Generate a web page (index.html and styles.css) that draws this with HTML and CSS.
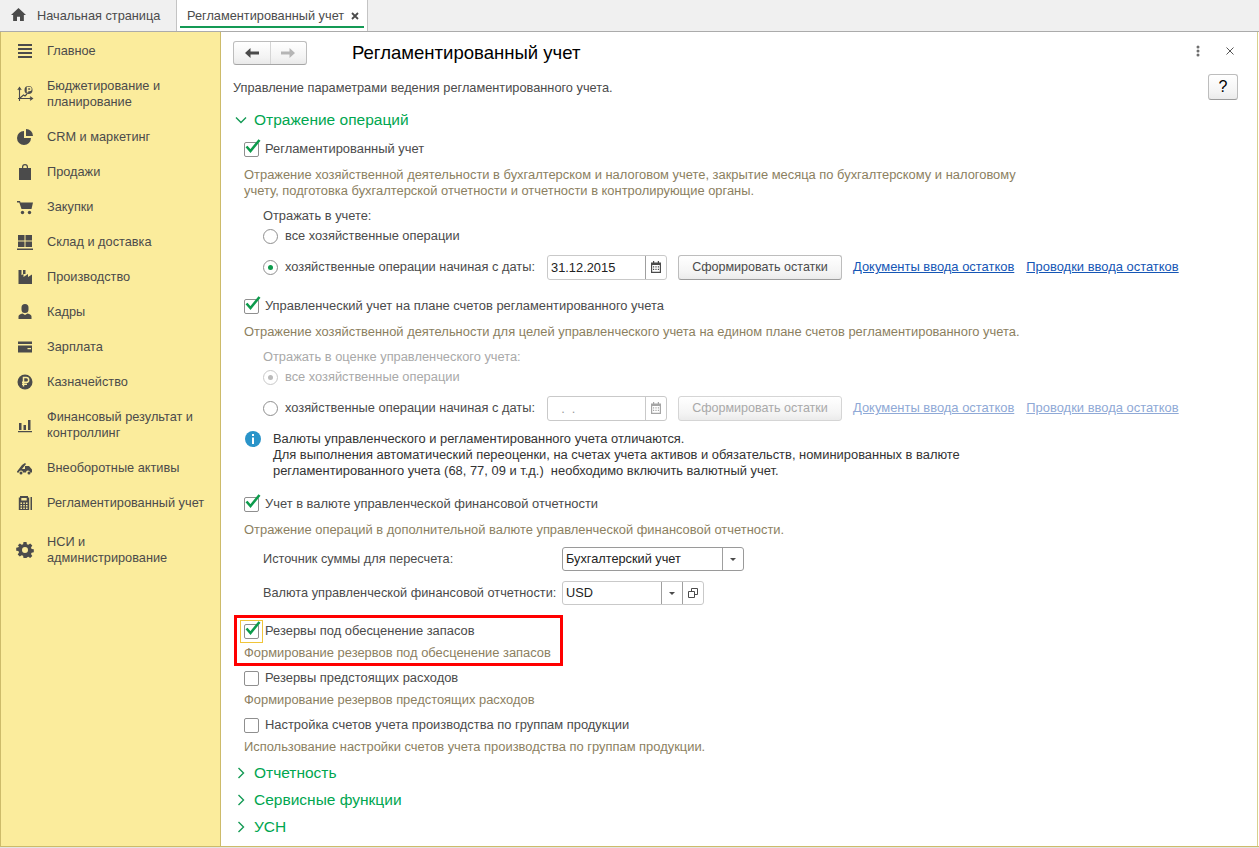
FILE: index.html
```html
<!DOCTYPE html>
<html lang="ru">
<head>
<meta charset="utf-8">
<title>Регламентированный учет</title>
<link rel="stylesheet" href="styles.css">
</head>
<body>
<div class="app">
  <header class="tabs">
    <div class="tab tab-home">
      <svg class="home-icon" viewBox="0 0 14 12"><path d="M7 0 0 6.500h2V12h3.600V8h2.800v4H12V6.500h2z"/></svg>
      <span>Начальная страница</span>
    </div>
    <div class="tab tab-active">
      <span>Регламентированный учет</span>
      <svg class="tab-close" viewBox="0 0 8 8"><path d="M1 1l6 6M7 1 1 7"/></svg>
    </div>
  </header>
  <div class="body">
    <nav class="side">
      <div class="side-item"><svg class="si" viewBox="0 0 16 16"><path d="M1 1h14v2H1zM1 5h14v2H1zM1 9h14v2H1zM1 13h14v2H1z"/></svg><span>Главное</span></div>
      <div class="side-item"><svg class="si" viewBox="0 0 16 16"><path class="thin" d="M2.500 15V2M.8 4 2.500 1.500 4.200 4M1 12.500h14M13 10.800l2.500 1.700-2.500 1.700M3 12 6.500 9l1.500 1L10 8"/><circle cx="11.500" cy="4" r="4"/><path class="cut" d="M10.500 6.500v-5h2a1.400 1.400 0 0 1 0 3h-2"/></svg><span>Бюджетирование и<br>планирование</span></div>
      <div class="side-item"><svg class="si" viewBox="0 0 16 16"><path d="M7 2a7 7 0 1 0 7 7H7z"/><path d="M9 0a7 7 0 0 1 7 7H9z"/></svg><span>CRM и маркетинг</span></div>
      <div class="side-item"><svg class="si" viewBox="0 0 16 16"><path d="M2 4h3V3a3 3 0 0 1 6 0v1h3v12H2zM6.200 4h3.600V3a1.800 1.800 0 0 0-3.600 0z"/></svg><span>Продажи</span></div>
      <div class="side-item"><svg class="si" viewBox="0 0 16 16"><path d="M0 2h3l.500 1.500H16L14.500 10H4.500L2.300 3.500H0z"/><circle cx="5.500" cy="13.500" r="1.700"/><circle cx="12.500" cy="13.500" r="1.700"/></svg><span>Закупки</span></div>
      <div class="side-item"><svg class="si" viewBox="0 0 16 16"><path d="M1 1h6.500v5.500H1zM8.500 1H15v5.500H8.500zM1 7.500h6.500V13H1zM8.500 7.500H15V13H8.500zM0 14.500h16V16H0z"/></svg><span>Склад и доставка</span></div>
      <div class="side-item"><svg class="si" viewBox="0 0 16 16"><path d="M1.500 1h3v7h-3zM6 1h2.500v4H6zM1.500 15V8l5-3v3l4.500-3v3l4-2.500V15z"/></svg><span>Производство</span></div>
      <div class="side-item"><svg class="si" viewBox="0 0 16 16"><path d="M8 0a3.500 3.500 0 0 1 3.500 3.500v2a3.500 3.500 0 0 1-7 0v-2A3.500 3.500 0 0 1 8 0zM5.500 9.500 8 11l2.500-1.500c2.500.5 4 1.500 4 3V15h-13v-2.500c0-1.500 1.500-2.500 4-3z"/></svg><span>Кадры</span></div>
      <div class="side-item"><svg class="si" viewBox="0 0 16 16"><path fill-rule="evenodd" d="M1 2.500h14V5H1zM1 6.500h14v7H1zM10.500 9v1.300H14V9z"/></svg><span>Зарплата</span></div>
      <div class="side-item"><svg class="si" viewBox="0 0 16 16"><circle cx="8" cy="8" r="7.500"/><path class="cut" d="M6.500 12.500v-9h2.800a2.400 2.400 0 0 1 0 4.800H5M5 10.200h5"/></svg><span>Казначейство</span></div>
      <div class="side-item"><svg class="si" viewBox="0 0 16 16"><path d="M2 6h2.500v7H2zM6.500 8H9v5H6.500zM11 3h2.500v10H11zM1 14h14v1.200H1z"/></svg><span>Финансовый результат и<br>контроллинг</span></div>
      <div class="side-item"><svg class="si" viewBox="0 0 16 16"><path d="M0 11.500 5 5l3-2 1 1-4 5h3V6h4l3 3.500v3h-2a2 2 0 0 0-4 0H6a2 2 0 0 0-4 0H0z"/><circle cx="4" cy="13" r="1.500"/><circle cx="12" cy="13" r="1.500"/></svg><span>Внеоборотные активы</span></div>
      <div class="side-item"><svg class="si" viewBox="0 0 16 16"><path fill-rule="evenodd" d="M3 1h8v1.500h1.200V15H1.800V2.500H3zM4.300 3v2.500h5.400V3zM3.500 7.500v1.500H5V7.500zM6.300 7.500v1.500h1.500V7.500zM9 7.500v1.500h1.500V7.500zM3.500 10v1.500H5V10zM6.300 10v1.500h1.500V10zM9 10v1.500h1.500V10zM3.500 12.500V14H5v-1.500zM6.300 12.500V14h1.500v-1.500zM9 12.500V14h1.500v-1.500z"/><path d="M13.500 2H15v13h-1.500z"/></svg><span>Регламентированный учет</span></div>
      <div class="side-item side-last"><svg class="si" viewBox="0 0 16 16"><path fill-rule="evenodd" d="M6.500 0h3l.4 2.200 1.400.6L13.200 1.500l2.100 2.100-1.300 1.900.6 1.400 2.200.4v3l-2.200.4-.6 1.400 1.300 1.900-2.100 2.100-1.900-1.300-1.400.6L9.500 16h-3l-.4-2.200-1.400-.6-1.900 1.300L.7 12.400 2 10.500l-.6-1.400-2.200-.4v-3l2.200-.4.600-1.400L.7 3.600 2.800 1.500 4.700 2.800l1.400-.6z M8 5a3 3 0 1 0 0 6 3 3 0 0 0 0-6z"/></svg><span>НСИ и<br>администрирование</span></div>
    </nav>
    <main class="main">
      <div class="toolbar">
        <div class="nav-btns">
          <button class="nav-btn"><svg viewBox="0 0 14 10"><path d="M5.500 0v3.500H14v3H5.500V10L0 5z"/></svg></button>
          <button class="nav-btn nav-off"><svg viewBox="0 0 14 10"><path d="M8.500 0v3.500H0v3h8.500V10L14 5z"/></svg></button>
        </div>
        <h1 class="title">Регламентированный учет</h1>
        <svg class="dots" viewBox="0 0 4 12"><circle cx="2" cy="2" r="1.500"/><circle cx="2" cy="6" r="1.500"/><circle cx="2" cy="10" r="1.500"/></svg>
        <svg class="win-close" viewBox="0 0 8 8"><path d="M.5.500l7 7M7.500.500l-7 7"/></svg>
      </div>

      <div class="row intro"><span>Управление параметрами ведения регламентированного учета.</span><button class="help">?</button></div>

      <div class="row sec mt16"><svg class="chev" viewBox="0 0 12 8"><path d="M1 1.500 6 6.500 11 1.500"/></svg>Отражение операций</div>

      <div class="row check mt13"><span class="cb on"><svg viewBox="0 0 16 14"><path d="M1.500 7.500 5.500 12 14.500 1"/></svg></span>Регламентированный учет</div>
      <div class="row note mt10">Отражение хозяйственной деятельности в бухгалтерском и налоговом учете, закрытие месяца по бухгалтерскому и налоговому</div>
      <div class="row note">учету, подготовка бухгалтерской отчетности и отчетности в контролирующие органы.</div>
      <div class="row sub mt9">Отражать в учете:</div>
      <div class="row radio mt4"><span class="rb"></span>все хозяйственные операции</div>
      <div class="row radio mt15"><span class="rb on"></span><span class="radio-label">хозяйственные операции начиная с даты:</span>
        <span class="date"><span class="date-val">31.12.2015</span><span class="cal"><svg viewBox="0 0 12 12"><path fill-rule="evenodd" d="M1 1.500h2V0h1.200v1.500h3.600V0H9v1.500h2V12H1zM2.200 4v6.800h7.600V4zM3 5.200h1.200v1.200H3zM5.400 5.200h1.200v1.200H5.400zM7.800 5.200H9v1.200H7.800zM3 7.800h1.200V9H3zM5.400 7.800h1.200V9H5.400zM7.800 7.800H9V9H7.800z"/></svg></span></span>
        <button class="btn">Сформировать остатки</button>
        <a class="link link-a" href="#">Документы ввода остатков</a>
        <a class="link link-b" href="#">Проводки ввода остатков</a>
      </div>

      <div class="row check mt23"><span class="cb on"><svg viewBox="0 0 16 14"><path d="M1.500 7.500 5.500 12 14.500 1"/></svg></span>Управленческий учет на плане счетов регламентированного учета</div>
      <div class="row note mt10">Отражение хозяйственной деятельности для целей управленческого учета на едином плане счетов регламентированного учета.</div>
      <div class="row sub muted mt9">Отражать в оценке управленческого учета:</div>
      <div class="row radio muted mt4"><span class="rb on off"></span>все хозяйственные операции</div>
      <div class="row radio mt15"><span class="rb"></span><span class="radio-label">хозяйственные операции начиная с даты:</span>
        <span class="date off"><span class="date-val">&nbsp;&nbsp;.&nbsp;&nbsp;.</span><span class="cal"><svg viewBox="0 0 12 12"><path fill-rule="evenodd" d="M1 1.500h2V0h1.200v1.500h3.600V0H9v1.500h2V12H1zM2.200 4v6.800h7.600V4zM3 5.200h1.200v1.200H3zM5.400 5.200h1.200v1.200H5.400zM7.800 5.200H9v1.200H7.800zM3 7.800h1.200V9H3zM5.400 7.800h1.200V9H5.400zM7.800 7.800H9V9H7.800z"/></svg></span></span>
        <button class="btn off">Сформировать остатки</button>
        <a class="link link-a off" href="#">Документы ввода остатков</a>
        <a class="link link-b off" href="#">Проводки ввода остатков</a>
      </div>

      <div class="info mt15">
        <svg class="info-icon" viewBox="0 0 16 16"><circle cx="8" cy="8" r="8"/><path d="M7 3h2v2H7zM7 6.500h2V13H7z"/></svg>
        <div>Валюты управленческого и регламентированного учета отличаются.<br>Для выполнения автоматический переоценки, на счетах учета активов и обязательств, номинированных в валюте<br>регламентированного учета (68, 77, 09 и т.д.)&nbsp; необходимо включить валютный учет.</div>
      </div>

      <div class="row check mt17"><span class="cb on"><svg viewBox="0 0 16 14"><path d="M1.500 7.500 5.500 12 14.500 1"/></svg></span>Учет в валюте управленческой финансовой отчетности</div>
      <div class="row note mt10">Отражение операций в дополнительной валюте управленческой финансовой отчетности.</div>
      <div class="row form mt13"><span class="form-label">Источник суммы для пересчета:</span>
        <span class="select sel-a"><span class="sel-val">Бухгалтерский учет</span><span class="sel-btn"><i class="caret"></i></span></span>
      </div>
      <div class="row form mt18"><span class="form-label">Валюта управленческой финансовой отчетности:</span>
        <span class="select sel-b"><span class="sel-val">USD</span><span class="sel-btn"><i class="caret"></i></span><span class="sel-btn"><svg class="open-icon" viewBox="0 0 10 10"><path d="M3.500 3V.5h6v6H7M.5 3.500h6v6h-6z"/></svg></span></span>
      </div>

      <div class="marked mt22">
        <div class="row check"><span class="cb on focus"><svg viewBox="0 0 16 14"><path d="M1.500 7.500 5.500 12 14.500 1"/></svg></span>Резервы под обесценение запасов</div>
        <div class="row note mt6">Формирование резервов под обесценение запасов</div>
      </div>
      <div class="row check mt9"><span class="cb"></span>Резервы предстоящих расходов</div>
      <div class="row note mt6">Формирование резервов предстоящих расходов</div>
      <div class="row check mt9"><span class="cb"></span>Настройка счетов учета производства по группам продукции</div>
      <div class="row note mt6">Использование настройки счетов учета производства по группам продукции.</div>

      <div class="row sec mt10"><svg class="chev" viewBox="0 0 8 12"><path d="M1.500 1 6.500 6 1.500 11"/></svg>Отчетность</div>
      <div class="row sec mt11"><svg class="chev" viewBox="0 0 8 12"><path d="M1.500 1 6.500 6 1.500 11"/></svg>Сервисные функции</div>
      <div class="row sec mt11"><svg class="chev" viewBox="0 0 8 12"><path d="M1.500 1 6.500 6 1.500 11"/></svg>УСН</div>
    </main>
  </div>
  <div class="bottom"></div>
</div>
</body>
</html>
```

FILE: styles.css
```css
*, *::before, *::after { box-sizing: border-box; }
html, body { margin: 0; height: 100%; overflow: hidden; }
body { font: 12.85px/16px "Liberation Sans", Arial, sans-serif; color: #4b4b4b; background: #fff; }
svg { display: block; }
.app { height: 848px; display: flex; flex-direction: column; }

.tabs { height: 32px; flex: none; display: flex; background: #f0f0f0; border-bottom: 1px solid #ababab; font-size: 12.75px; }
.tab { display: flex; align-items: center; height: 31px; border-right: 1px solid #c4c4c4; }
.tab-home { width: 177px; padding-left: 11px; color: #4b4b4b; }
.home-icon { width: 15px; height: 13px; fill: #4b4b4b; margin-right: 11px; margin-top: -2px; }
.tab-active { width: 191px; padding-left: 10px; background: #fff; position: relative; }
.tab-active::after { content: ""; position: absolute; left: 3px; right: 3px; bottom: 3px; height: 2px; background: #149a55; }
.tab-close { width: 8px; height: 8px; margin-left: 7px; stroke: #4b4b4b; stroke-width: 1.800; fill: none; }

.body { flex: 1; min-height: 0; display: flex; }
.side { width: 221px; flex: none; background: #fbec9c; border-left: 1px solid #cdbb6a; border-right: 1px solid #cdbb6a; font-size: 12.75px; }
.side-item { display: flex; align-items: center; padding: 11px 0 8px 16px; color: #4b4b4b; }
.side-last { margin-top: 4px; }
.si { width: 16px; height: 16px; fill: #4b4b4b; margin-right: 14px; flex: none; overflow: visible; }
.si .thin { fill: none; stroke: #4b4b4b; stroke-width: 1.100; }
.si .cut { fill: none; stroke: #fbec9c; stroke-width: 1.500; }

.main { flex: 1; min-width: 0; padding: 9px 0 0 12px; border-right: 1px solid #d9cf8e; margin-right: 1px; }
.toolbar { height: 24px; display: flex; align-items: center; }
.nav-btns { width: 74px; height: 24px; display: flex; border: 1px solid #bdbdbd; border-bottom-color: #a5a5a5; border-radius: 3px; background: linear-gradient(#fff, #f3f3f3 70%, #e9e9e9); }
.nav-btn { flex: 1; border: 0; padding: 0; background: none; display: flex; align-items: center; justify-content: center; }
.nav-btn + .nav-btn { border-left: 1px solid #d5d5d5; }
.nav-btn svg { width: 14px; height: 10px; fill: #4b4b4b; }
.nav-off svg { fill: #b5b5b5; }
.title { margin: 0 0 0 45px; font-size: 18.55px; font-weight: 400; color: #000; line-height: 24px; }
.dots { width: 4px; height: 12px; fill: #6e6e6e; margin-left: auto; margin-top: -4px; }
.win-close { width: 8px; height: 8px; stroke: #555; stroke-width: 1; fill: none; margin: -4px 23px 0 26px; }

.row { display: flex; align-items: center; height: 16px; }
.intro { margin-top: 15px; justify-content: space-between; padding-right: 19px; font-size: 12.78px; }
.help { width: 30px; height: 26px; margin-top: -2px; flex: none; padding: 0; border: 1px solid #bdbdbd; border-bottom-color: #9c9c9c; border-radius: 3px; background: linear-gradient(#fff, #f4f4f4 70%, #ebebeb); font: 16px "Liberation Sans", Arial, sans-serif; color: #000; }
.sec { font-size: 15.5px; color: #00a650; padding-left: 2px; }
.chev { width: 12px; height: 12px; fill: none; stroke: #149a55; stroke-width: 1.400; margin-right: 7px; flex: none; }
.check { padding-left: 11px; font-size: 12.92px; }
.cb { position: relative; width: 15px; height: 15px; margin-right: 6px; flex: none; border: 1px solid #8f8f8f; border-radius: 2px; background: #fff; }
.cb svg { position: absolute; left: 0; top: -4px; width: 16px; height: 14px; fill: none; stroke: #0d9b4c; stroke-width: 2.600; }
.focus::after { content: ""; position: absolute; left: -5px; top: -5px; width: 23px; height: 23px; border: 1px solid #f0c53a; }
.note { padding-left: 11px; color: #8c7f5f; white-space: nowrap; font-size: 12.92px; }
.sub { padding-left: 30px; }
.muted { color: #a9a9a9; }
.radio { padding-left: 30px; white-space: nowrap; }
.rb { position: relative; width: 15px; height: 15px; margin-right: 7px; flex: none; border: 1px solid #8f8f8f; border-radius: 50%; background: #fff; }
.rb.on::after { content: ""; position: absolute; left: 4px; top: 4px; width: 5px; height: 5px; border-radius: 50%; background: #0d9b4c; }
.rb.off { border-color: #c9c9c9; }
.rb.off::after { background: #bbb; }
.radio-label { width: 262px; flex: none; }
.date { width: 120px; height: 25px; flex: none; display: flex; border: 1px solid #c9c9c9; border-radius: 3px; color: #222; }
.date-val { flex: 1; padding: 4px 0 0 3px; }
.date.off .date-val { color: #9a9a9a; padding-left: 6px; }
.cal { width: 21px; border-left: 1px solid #9f9f9f; display: flex; align-items: center; justify-content: center; }
.cal svg { width: 12px; height: 12px; fill: #4b4b4b; }
.date.off .cal { border-left-color: #c9c9c9; }
.date.off .cal svg { fill: #a5a5a5; }
.btn { width: 164px; height: 25px; flex: none; margin-left: 11px; padding: 0; border: 1px solid #bdbdbd; border-bottom-color: #9c9c9c; border-radius: 3px; background: linear-gradient(#fff, #f4f4f4 70%, #ebebeb); font: 12.55px "Liberation Sans", Arial, sans-serif; color: #4b4b4b; }
.btn.off { color: #a9a9a9; border-color: #d5d5d5; }
.link { color: #1556b5; text-decoration: underline; white-space: nowrap; font-size: 12.95px; }
.link.off { color: #8fa9d6; }
.link-a { margin-left: 11px; }
.link-b { margin-left: 12px; }
.info { display: flex; padding-left: 12px; color: #333; font-size: 12.92px; }
.info-icon { width: 16px; height: 16px; fill: #2a94c9; margin-right: 12px; flex: none; }
.info-icon path { fill: #fff; }
.form { padding-left: 30px; white-space: nowrap; font-size: 12.75px; }
.form-label { width: 299px; flex: none; }
.select { height: 24px; flex: none; display: flex; border: 1px solid #c9c9c9; border-radius: 3px; color: #222; }
.sel-a { width: 182px; border-color: #9a9a9a; }
.sel-b { width: 142px; }
.sel-val { flex: 1; padding: 3px 0 0 3px; }
.sel-btn { width: 21px; flex: none; border-left: 1px solid #9f9f9f; display: flex; align-items: center; justify-content: center; }
.caret { width: 0; height: 0; border: 3px solid transparent; border-top: 3px solid #4b4b4b; border-bottom: 0; }
.open-icon { width: 10px; height: 10px; fill: none; stroke: #4b4b4b; stroke-width: 1; }
.marked { position: relative; }
.marked::after { content: ""; position: absolute; left: 1px; top: -8px; width: 329px; height: 51px; border: 3px solid #f00; pointer-events: none; }

.mt4 { margin-top: 4px; }
.mt6 { margin-top: 6px; }
.mt9 { margin-top: 9px; }
.mt10 { margin-top: 10px; }
.mt11 { margin-top: 11px; }
.mt13 { margin-top: 13px; }
.mt15 { margin-top: 15px; }
.mt16 { margin-top: 16px; }
.mt17 { margin-top: 17px; }
.mt18 { margin-top: 18px; }
.mt22 { margin-top: 22px; }
.mt23 { margin-top: 23px; }

.bottom { height: 2px; flex: none; background: #cdbb6a; border-bottom: 1px solid #e4e4e4; }
```
